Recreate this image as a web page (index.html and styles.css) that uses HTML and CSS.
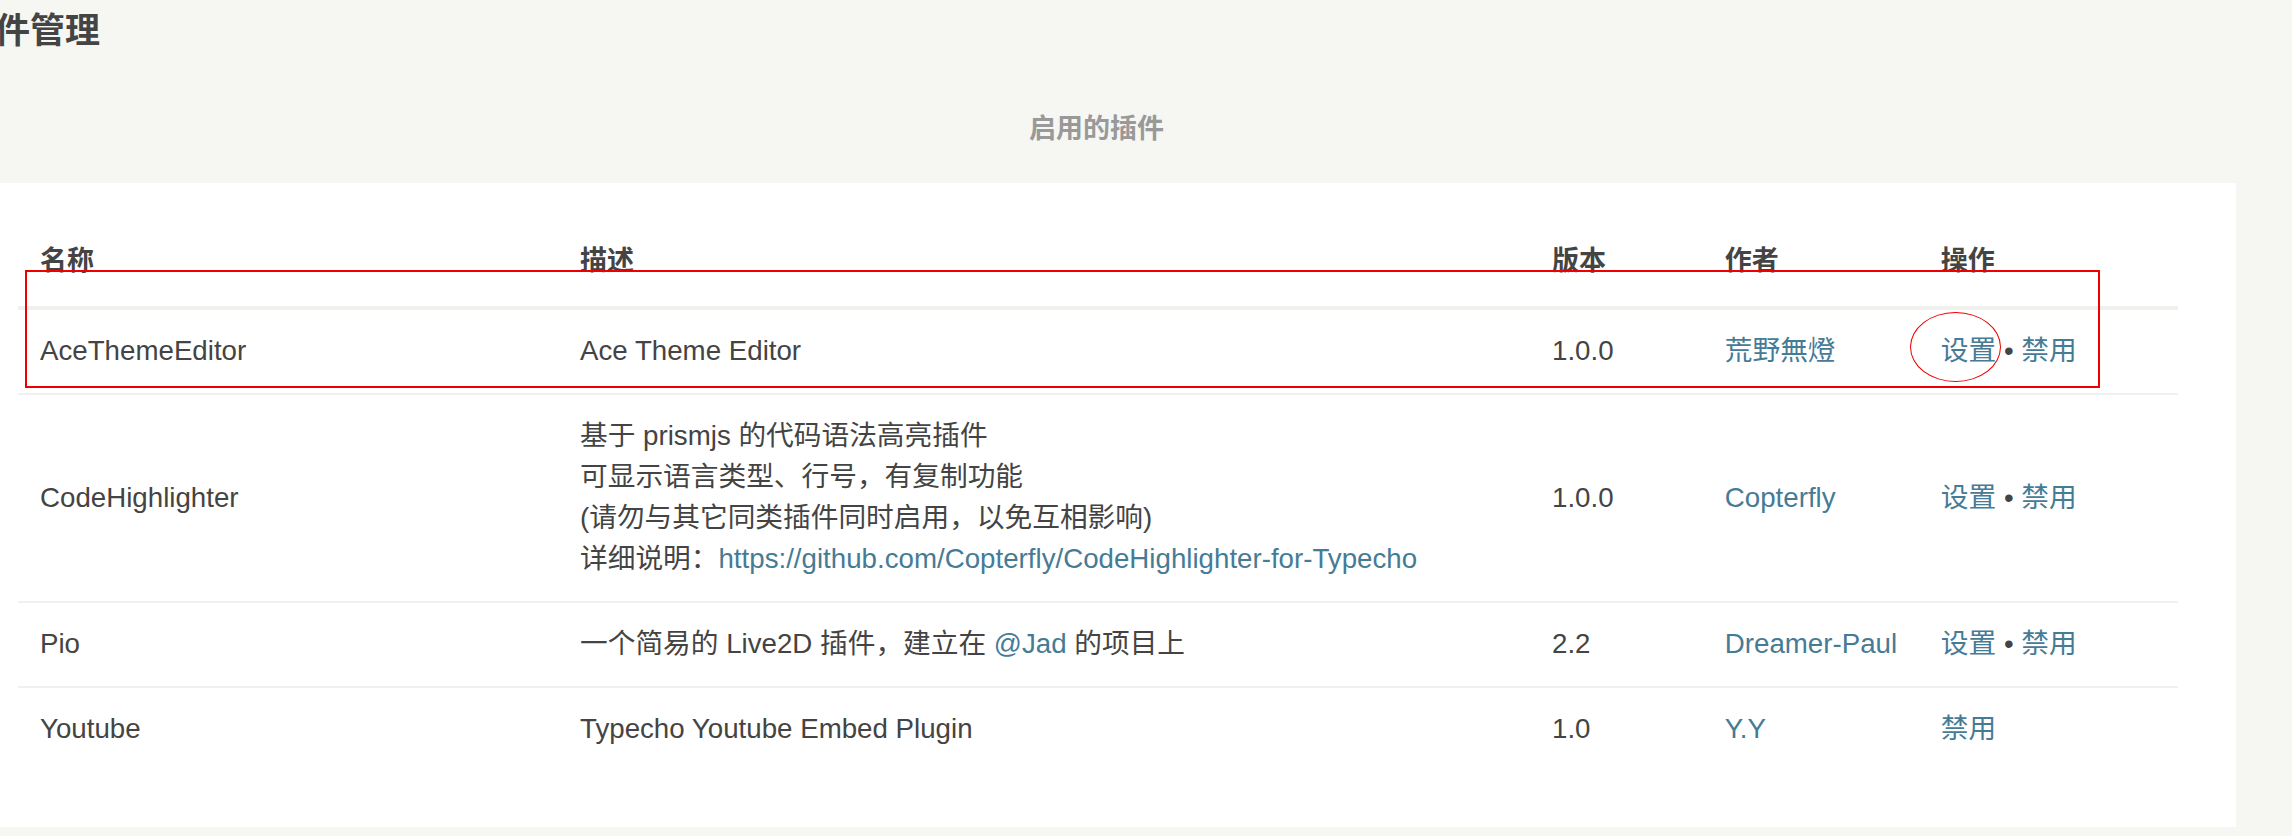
FILE: index.html
```html
<!DOCTYPE html>
<html lang="zh-CN">
<head>
<meta charset="utf-8">
<title>插件管理</title>
<link rel="stylesheet" href="styles.css">
</head>
<body>
<div class="page">
  <h2 class="title">插件管理</h2>
  <div class="tabs"><span class="tab">启用的插件</span></div>
  <div class="panel">
    <table class="list">
      <colgroup>
        <col class="c-name"><col class="c-desc"><col class="c-ver"><col class="c-author"><col class="c-ops">
      </colgroup>
      <thead>
        <tr><th>名称</th><th>描述</th><th>版本</th><th>作者</th><th>操作</th></tr>
      </thead>
      <tbody>
        <tr>
          <td>AceThemeEditor</td>
          <td>Ace Theme Editor</td>
          <td>1.0.0</td>
          <td><a href="#">荒野無燈</a></td>
          <td><a href="#">设置</a> &bull; <a href="#">禁用</a></td>
        </tr>
        <tr>
          <td>CodeHighlighter</td>
          <td>基于 prismjs 的代码语法高亮插件<br>可显示语言类型、行号，有复制功能<br>(请勿与其它同类插件同时启用，以免互相影响)<br>详细说明：<a href="#">https://github.com/Copterfly/CodeHighlighter-for-Typecho</a></td>
          <td>1.0.0</td>
          <td><a href="#">Copterfly</a></td>
          <td><a href="#">设置</a> &bull; <a href="#">禁用</a></td>
        </tr>
        <tr>
          <td>Pio</td>
          <td>一个简易的 Live2D 插件，建立在 <a href="#">@Jad</a> 的项目上</td>
          <td>2.2</td>
          <td><a href="#">Dreamer-Paul</a></td>
          <td><a href="#">设置</a> &bull; <a href="#">禁用</a></td>
        </tr>
        <tr class="last">
          <td>Youtube</td>
          <td>Typecho Youtube Embed Plugin</td>
          <td>1.0</td>
          <td><a href="#">Y.Y</a></td>
          <td><a href="#">禁用</a></td>
        </tr>
      </tbody>
    </table>
    <div class="mark-box"></div>
    <div class="mark-circle"></div>
  </div>
</div>
</body>
</html>
```

FILE: styles.css
```css
html, body {
  margin: 0;
  padding: 0;
  background: #F6F6F3;
  overflow: hidden;
}

body {
  font-family: "Liberation Sans", "Noto Sans CJK SC", sans-serif;
  color: #444;
}

.page {
  margin-left: -40px;
  margin-right: 56px;
}

.title {
  margin: 6px 0 0;
  font-size: 35px;
  line-height: 50px;
  font-weight: bold;
  color: #444;
}

.tabs {
  padding: 53px 0 30px 1069px;
  line-height: 40px;
}

.tab {
  font-size: 27px;
  font-weight: bold;
  color: #999;
}

.panel {
  position: relative;
  background: #fff;
  padding: 58px 58px 56px;
}

.list {
  width: 100%;
  border-collapse: collapse;
  table-layout: fixed;
  font-size: 27.7px;
  line-height: 41px;
}

.c-name { width: 25%; }
.c-desc { width: 45%; }
.c-ver { width: 8%; }
.c-author { width: 10%; }
.c-ops { width: 12%; }

.list th {
  text-align: left;
  font-weight: bold;
  font-size: 27px;
  padding: 0 22px 24px;
  border-bottom: 4px solid #F0F0EC;
  line-height: 41px;
}

.list td {
  padding: 20px 22px 22px;
  border-bottom: 2px solid #F0F0EC;
  vertical-align: middle;
  white-space: nowrap;
}

.list tr.last td {
  border-bottom: none;
}

.list a {
  color: #467B96;
  text-decoration: none;
}

.mark-box {
  position: absolute;
  left: 65px;
  top: 87px;
  width: 2071px;
  height: 114px;
  border: 2px solid #ee0000;
}

.mark-circle {
  position: absolute;
  left: 1950px;
  top: 129px;
  width: 89px;
  height: 68px;
  border: 1.5px solid #ee0000;
  border-radius: 50%;
}
```
